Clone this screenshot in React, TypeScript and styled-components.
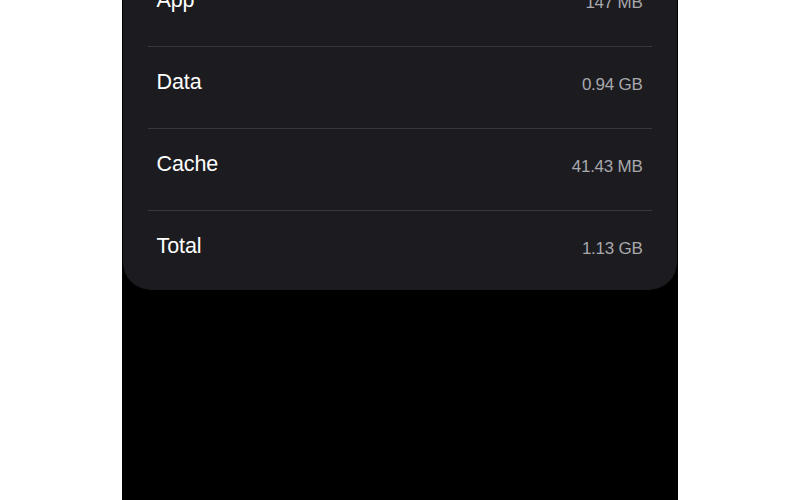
import React from "react";
import styled, { createGlobalStyle } from "styled-components";

const GlobalStyle = createGlobalStyle`
  html, body { margin: 0; padding: 0; background: #ffffff; }
  body { font-family: "Liberation Sans", Arial, Helvetica, sans-serif; -webkit-font-smoothing: antialiased; }
`;

const Page = styled.div`
  display: flex;
  justify-content: center;
  height: 500px;
  overflow: hidden;
  background: #ffffff;
`;

const Column = styled.div`
  width: 556px;
  margin-left: -1px;
  height: 100%;
  background: #000000;
  display: flex;
  flex-direction: column;
`;

const Card = styled.section`
  margin: -35px 1px 0 1px;
  background: #1c1b1f;
  border-radius: 0 0 28px 28px;
  display: flex;
  flex-direction: column;
`;

const Row = styled.div<{ $last?: boolean }>`
  height: ${(p) => (p.$last ? 79 : 81)}px;
  box-sizing: border-box;
  padding: 23px 34px 0 34px;
  display: flex;
  align-items: baseline;
  justify-content: space-between;
`;

const Label = styled.span`
  font-size: 21.5px;
  line-height: 24px;
  color: #ffffff;
  letter-spacing: -0.1px;
`;

const Value = styled.span`
  font-size: 17px;
  line-height: 24px;
  color: #a8a8ad;
  letter-spacing: -0.25px;
  position: relative;
  top: 1px;
`;

const Divider = styled.div`
  height: 1px;
  margin: 0 25px;
  background: #38373c;
`;

const items = [
  { label: "App", value: "147 MB" },
  { label: "Data", value: "0.94 GB" },
  { label: "Cache", value: "41.43 MB" },
  { label: "Total", value: "1.13 GB" },
];

export default function App() {
  return (
    <>
      <GlobalStyle />
      <Page>
        <Column>
          <Card>
            {items.map((it, i) => (
              <React.Fragment key={it.label}>
                {i > 0 && <Divider />}
                <Row $last={i === items.length - 1}>
                  <Label>{it.label}</Label>
                  <Value>{it.value}</Value>
                </Row>
              </React.Fragment>
            ))}
          </Card>
        </Column>
      </Page>
    </>
  );
}
